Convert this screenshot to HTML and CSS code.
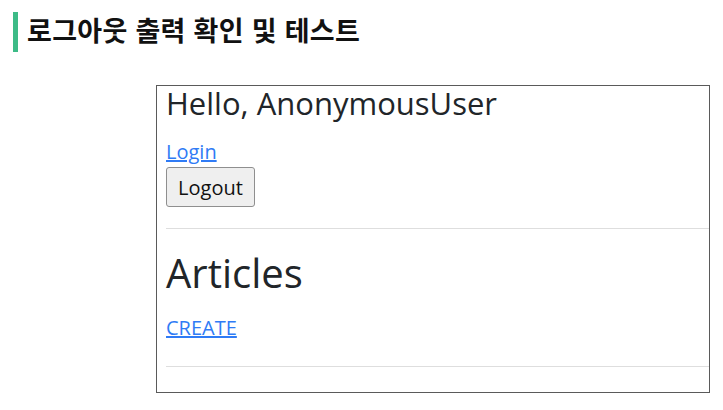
FILE: index.html
```html
<!DOCTYPE html>
<html lang="ko">
<head>
<meta charset="utf-8">
<title>로그아웃 출력 확인 및 테스트</title>
<link rel="stylesheet" href="styles.css">
</head>
<body>
  <header class="slide-title">
    <span class="accent"></span>
    <h2 class="title-text">로그아웃 출력 확인 및 테스트</h2>
  </header>
  <main class="frame">
    <h3 class="hello">Hello, AnonymousUser</h3>
    <a class="link login" href="#">Login</a>
    <div class="btn-row"><button class="btn" type="button">Logout</button></div>
    <hr class="rule rule-top">
    <h1 class="articles">Articles</h1>
    <a class="link create" href="#">CREATE</a>
    <hr class="rule rule-bottom">
  </main>
</body>
</html>
```

FILE: styles.css
```css
* { box-sizing: border-box; }

html, body {
  margin: 0;
  padding: 0;
  background: #ffffff;
}

body {
  width: 723px;
  height: 410px;
  overflow: hidden;
}

.slide-title {
  display: flex;
  align-items: center;
  gap: 9px;
  padding: 12px 0 0 13px;
  height: 52px;
}

.accent {
  display: block;
  width: 5px;
  height: 40px;
  background: #3dbb87;
}

.title-text {
  margin: 0 0 5px 0;
  font-family: "Noto Sans CJK KR", "Noto Sans", sans-serif;
  font-weight: 700;
  font-size: 27px;
  line-height: 40px;
  color: #111111;
  letter-spacing: 0.3px;
  white-space: nowrap;
}

.frame {
  display: flex;
  flex-direction: column;
  align-items: flex-start;
  margin: 33px 0 0 156px;
  width: 554px;
  height: 308px;
  border: 1px solid #5a5a5a;
  padding-left: 9px;
  font-family: "Open Sans", "Noto Sans", sans-serif;
  color: #212529;
}

.hello {
  margin: 0;
  font-size: 31px;
  font-weight: 400;
  line-height: 34px;
  white-space: nowrap;
}

.link {
  color: #2f7bf5;
  text-decoration: underline;
  font-size: 20px;
  line-height: 24px;
}

.login {
  margin-top: 20px;
}

.btn-row {
  margin-top: 3px;
}

.btn {
  display: block;
  width: 89px;
  height: 40px;
  padding: 0;
  font-family: "Open Sans", "Noto Sans", sans-serif;
  font-size: 20px;
  color: #111111;
  background: #efefef;
  border: 1px solid #8f8f8f;
  border-radius: 3px;
}

.rule {
  align-self: stretch;
  margin: 0;
  border: 0;
  border-top: 1px solid #dedede;
  height: 0;
}

.rule-top {
  margin-top: 21px;
}

.articles {
  margin: 24px 0 0 0;
  font-size: 40px;
  font-weight: 400;
  line-height: 40px;
  white-space: nowrap;
}

.create {
  margin-top: 23px;
}

.rule-bottom {
  margin-top: 26px;
}
```
